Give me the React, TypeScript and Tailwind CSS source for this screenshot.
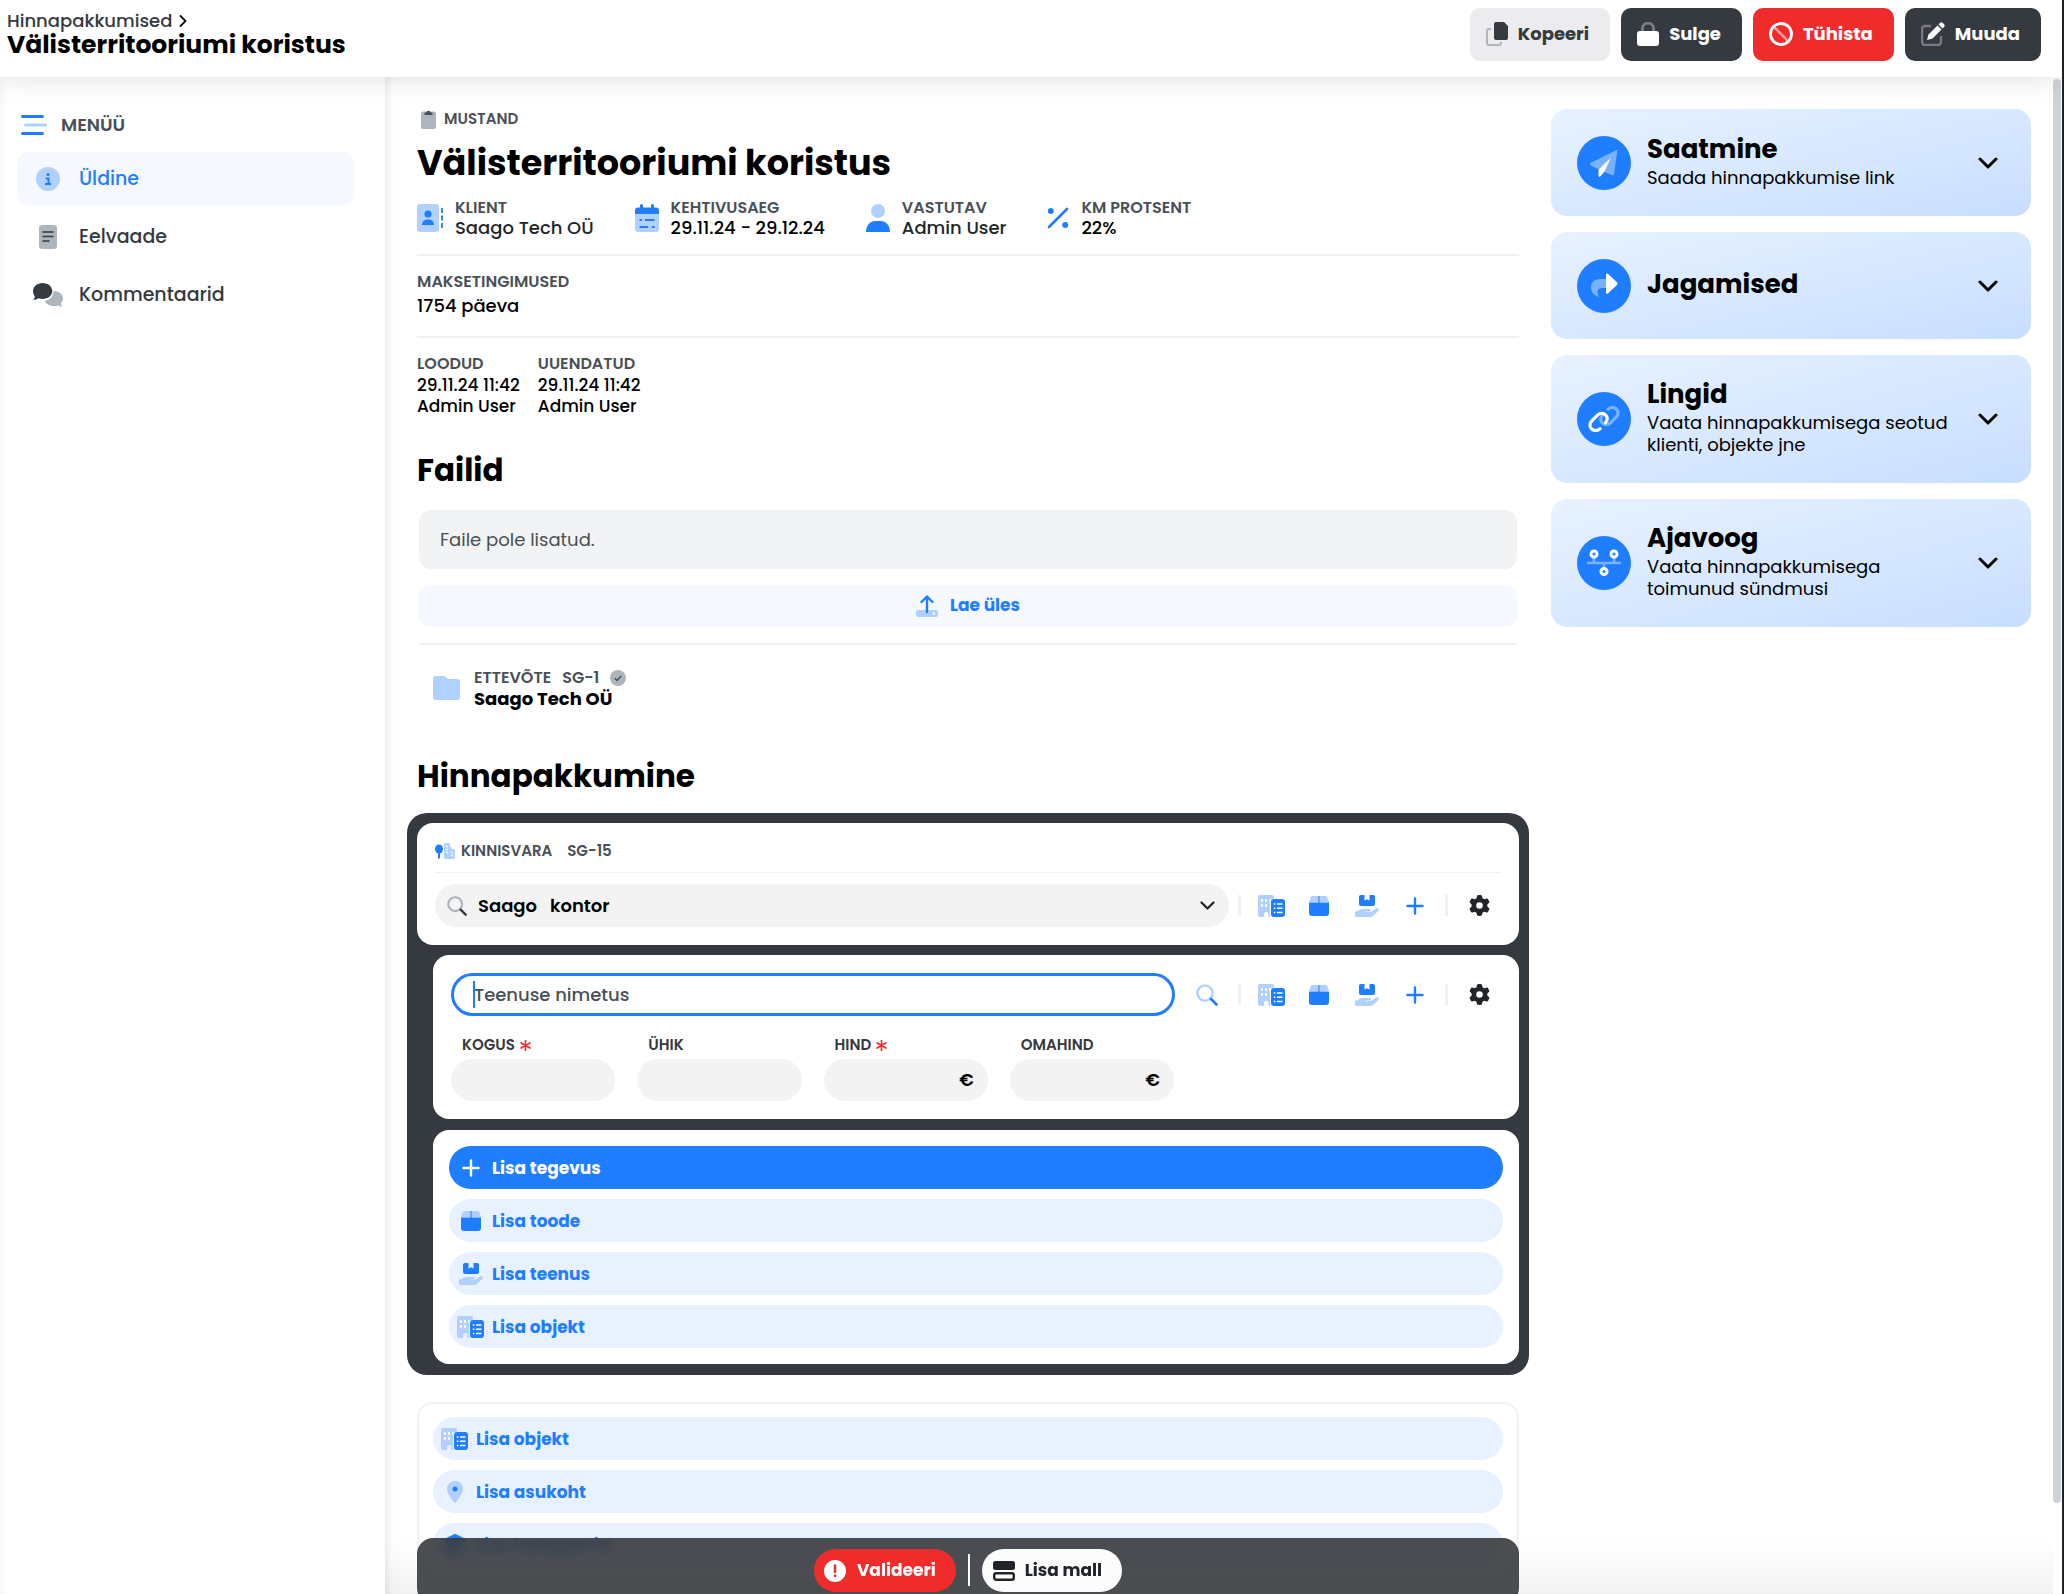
import React from "react";
import { FaGear } from "react-icons/fa6";

type IconProps = { className?: string };

const BLUE = "#1f7eff";
const PALE = "#b0d0ff";
const DARK = "#343a40";
const GREY = "#adb5bd";

function Chevron({ className }: IconProps) {
  return (
    <svg viewBox="0 0 20 12" className={className} fill="none" stroke="currentColor" strokeWidth="3" strokeLinecap="round" strokeLinejoin="round" aria-hidden="true">
      <path d="M2 2l8 8 8-8" />
    </svg>
  );
}

function ChevronRight() {
  return (
    <svg viewBox="0 0 8 12" className="h-3 w-2" fill="none" stroke="#111" strokeWidth="1.8" strokeLinecap="round" strokeLinejoin="round" aria-hidden="true">
      <path d="M1.5 1l5 5-5 5" />
    </svg>
  );
}

function CopyIcon() {
  return (
    <svg viewBox="0 0 22 24" className="h-6 w-[22px]" aria-hidden="true">
      <path d="M5 7H3a2 2 0 0 0-2 2v12a2 2 0 0 0 2 2h10a2 2 0 0 0 2-2v-1" fill="none" stroke={GREY} strokeWidth="2" />
      <path d="M10 0h8l4 4v12a2 2 0 0 1-2 2H10a2 2 0 0 1-2-2V2a2 2 0 0 1 2-2z" fill={DARK} />
    </svg>
  );
}

function LockIcon() {
  return (
    <svg viewBox="0 0 22 24" className="h-6 w-[22px]" aria-hidden="true">
      <path d="M5.5 10V6.500a5.500 5.500 0 0 1 11 0V10" fill="none" stroke="#777b80" strokeWidth="3" />
      <rect x="0" y="9" width="22" height="15" rx="3" fill="#fff" />
    </svg>
  );
}

function BanIcon() {
  return (
    <svg viewBox="0 0 24 24" className="size-6" fill="none" aria-hidden="true">
      <path d="M5 5l14 14" stroke="#f99" strokeWidth="2.500" />
      <circle cx="12" cy="12" r="10.500" stroke="#fff" strokeWidth="2.800" />
    </svg>
  );
}

function EditIcon() {
  return (
    <svg viewBox="0 0 24 24" className="size-6" aria-hidden="true">
      <path d="M10 4H4a3 3 0 0 0-3 3v13a3 3 0 0 0 3 3h13a3 3 0 0 0 3-3v-6" fill="none" stroke="#777b80" strokeWidth="2.400" />
      <path d="M16.500 3.500l4 4L11.500 16.500 6 18l1.500-5.500z" fill="#fff" />
      <path d="M17.500 2.500l1.500-1.500a2 2 0 0 1 2.800 0l1.200 1.200a2 2 0 0 1 0 2.800L21.500 6.500z" fill="#fff" />
    </svg>
  );
}

function MenuIcon() {
  return (
    <svg viewBox="0 0 28 22" className="h-[22px] w-7" strokeWidth="3" strokeLinecap="round" aria-hidden="true">
      <path d="M2.500 2.500h20M2.500 19.500h20" stroke={BLUE} />
      <path d="M5.500 11h20" stroke={PALE} />
    </svg>
  );
}

function InfoIcon() {
  return (
    <svg viewBox="0 0 24 24" className="size-6" aria-hidden="true">
      <circle cx="12" cy="12" r="12" fill={PALE} />
      <circle cx="12" cy="7.500" r="1.600" fill={BLUE} />
      <path d="M9.800 11.500h2.700v5M9 17h6" fill="none" stroke={BLUE} strokeWidth="2" />
    </svg>
  );
}

function PageIcon() {
  return (
    <svg viewBox="0 0 18 24" className="h-6 w-[18px]" aria-hidden="true">
      <rect width="18" height="24" rx="3" fill={GREY} />
      <path d="M4 7h10M4 11.500h10M4 16h6" stroke={DARK} strokeWidth="1.600" strokeLinecap="round" />
    </svg>
  );
}

function CommentsIcon() {
  return (
    <svg viewBox="0 0 30 24" className="h-6 w-[30px]" aria-hidden="true">
      <path d="M20.500 8c5.300 0 9.500 3.300 9.500 7.500 0 2-.9 3.700-2.300 5 .3 1.200 1 2.200 1.800 3-1.700.1-3.300-.3-4.700-1-1.300.4-2.800.6-4.300.5-4-.1-7.500-2-8.800-5 5-.8 8.500-4.500 8.800-10z" fill={GREY} />
      <path d="M9.700 0C15 0 19.300 3.600 19.300 8S15 16 9.700 16c-1.500 0-2.900-.3-4.100-.7C4 16.400 2 17 .2 17c.9-1 1.500-2.300 1.700-3.600C.700 12 0 10 0 8c0-4.400 4.400-8 9.700-8z" fill={DARK} />
    </svg>
  );
}

function ClipboardIcon() {
  return (
    <svg viewBox="0 0 15 20" className="h-5 w-[15px]" aria-hidden="true">
      <rect y="2.500" width="15" height="17.500" rx="2.500" fill={GREY} />
      <path d="M3.500 6V3.500h1.800a2.300 2.300 0 0 1 4.400 0h1.800V6z" fill="#495057" />
    </svg>
  );
}

function AddressIcon() {
  return (
    <svg viewBox="0 0 26 28" className="h-7 w-[26px]" aria-hidden="true">
      <rect width="22" height="28" rx="3" fill={PALE} />
      <circle cx="11" cy="10" r="3.600" fill={BLUE} />
      <path d="M5 21a5 5 0 0 1 5-5.500h2a5 5 0 0 1 5 5.500z" fill={BLUE} />
      <path d="M25 4v5M25 11.500v5M25 19v5" stroke={BLUE} strokeWidth="1.800" />
    </svg>
  );
}

function CalendarIcon() {
  return (
    <svg viewBox="0 0 24 28" className="h-7 w-6" aria-hidden="true">
      <path d="M0 10h24v15a3 3 0 0 1-3 3H3a3 3 0 0 1-3-3z" fill={PALE} />
      <path d="M0 10V6.500a3 3 0 0 1 3-3h2V1.500a1.500 1.500 0 0 1 3 0v2h8v-2a1.500 1.500 0 0 1 3 0v2h2a3 3 0 0 1 3 3V10z" fill={BLUE} />
      <path d="M4.500 16h2.500M10 16h9.500M4.500 23h8.500M17 23h2.500" stroke={BLUE} strokeWidth="2" />
    </svg>
  );
}

function UserIcon() {
  return (
    <svg viewBox="0 0 24 28" className="h-7 w-6" aria-hidden="true">
      <circle cx="12" cy="7" r="7" fill={PALE} />
      <path d="M0 28c0-6.500 4-11 9.500-11h5C20 17 24 21.500 24 28z" fill={BLUE} />
    </svg>
  );
}

function PercentIcon() {
  return (
    <svg viewBox="0 0 22 22" className="size-[22px]" aria-hidden="true">
      <path d="M20 2L2 20" stroke={BLUE} strokeWidth="2.600" strokeLinecap="round" />
      <circle cx="3.800" cy="4" r="3" fill={BLUE} />
      <circle cx="18.200" cy="18" r="3" fill={BLUE} />
    </svg>
  );
}

function UploadIcon() {
  return (
    <svg viewBox="0 0 22 22" className="size-[22px]" aria-hidden="true">
      <rect y="15" width="22" height="7" rx="2.500" fill={PALE} />
      <circle cx="18" cy="18.500" r="1.200" fill="#fff" />
      <path d="M11 17V2M5.500 7L11 1.500 16.500 7" fill="none" stroke={BLUE} strokeWidth="2.400" strokeLinecap="round" strokeLinejoin="round" />
    </svg>
  );
}

function FolderIcon() {
  return (
    <svg viewBox="0 0 27 24" className="h-6 w-[27px]" aria-hidden="true">
      <path d="M3 0h8c1.500 0 2.500 3 4 3h9a3 3 0 0 1 3 3v15a3 3 0 0 1-3 3H3a3 3 0 0 1-3-3V3a3 3 0 0 1 3-3z" fill={PALE} />
    </svg>
  );
}

function VerifiedIcon() {
  return (
    <svg viewBox="0 0 16 16" className="size-4" aria-hidden="true">
      <circle cx="8" cy="8" r="8" fill={GREY} />
      <path d="M4.800 8.300l2.200 2.200 4.200-4.500" fill="none" stroke="#495057" strokeWidth="1.500" />
    </svg>
  );
}

function EstateIcon() {
  return (
    <svg viewBox="0 0 20 16" className="h-4 w-5" aria-hidden="true">
      <ellipse cx="4" cy="6" rx="4" ry="4.500" fill={BLUE} />
      <path d="M4 6v9.500" stroke={BLUE} strokeWidth="2" />
      <path d="M9 1.500A1.500 1.500 0 0 1 10.500 0h3A1.500 1.500 0 0 1 15 1.500V6l1-3 1 3h1.500A1.500 1.500 0 0 1 20 7.500v7a1.500 1.500 0 0 1-1.500 1.500h-8A1.500 1.500 0 0 1 9 14.500z" fill={PALE} />
      <path d="M11.200 3.500h1.800M11.200 6.500h1.800M11.200 9.500h1.800M16 9.500h1.800M16 12.500h1.800" stroke="#fff" strokeWidth="1.400" />
    </svg>
  );
}

function SearchIcon({ ring, handle, className }: { ring: string; handle: string; className: string }) {
  return (
    <svg viewBox="0 0 22 22" className={className} fill="none" aria-hidden="true">
      <circle cx="9" cy="9" r="7.600" stroke={ring} strokeWidth="2.400" />
      <path d="M15 15l5.500 5.500" stroke={handle} strokeWidth="2.600" strokeLinecap="round" />
    </svg>
  );
}

function BuildingIcon() {
  return (
    <svg viewBox="0 0 27 22" className="h-[22px] w-[27px]" aria-hidden="true">
      <path d="M0 2a2 2 0 0 1 2-2h12a2 2 0 0 1 2 2v1.500a4 4 0 0 0-4 3.500v15h-1.500v-3a2 2 0 0 0-4.500 0v3H2a2 2 0 0 1-2-2z" fill={PALE} />
      <path d="M3 5.500h2M7 5.500h2M11 5.500h2M3 10.500h2M7 10.500h2" stroke="#fff" strokeWidth="2.600" />
      <rect x="13" y="4" width="14" height="18" rx="3" fill={BLUE} />
      <path d="M15.800 9h1.600M19 9h5.500M15.800 13.200h1.600M19 13.200h5.500M15.800 17.500h1.600M19 17.500h5.500" stroke="#fff" strokeWidth="1.500" />
    </svg>
  );
}

function BoxIcon() {
  return (
    <svg viewBox="0 0 20 20" className="size-5" aria-hidden="true">
      <path d="M3.500 0h5.900v6H0l1.500-4.500A2 2 0 0 1 3.500 0zM10.600 0h5.900a2 2 0 0 1 2 1.500L20 6h-9.400z" fill={PALE} />
      <path d="M0 6.500h9.400V0h1.200v6.500H20V17a3 3 0 0 1-3 3H3a3 3 0 0 1-3-3z" fill={BLUE} />
    </svg>
  );
}

function HandBoxIcon() {
  return (
    <svg viewBox="0 0 24 22" className="h-[22px] w-6" aria-hidden="true">
      <path d="M6 0h3.500v5.500L12 4.200l2.500 1.300V0H18a2 2 0 0 1 2 2v7a2 2 0 0 1-2 2H6a2 2 0 0 1-2-2V2a2 2 0 0 1 2-2z" fill={BLUE} />
      <path d="M0 17.500c0-.8.500-1.200 1.200-1.200h1.600c1.500-1.600 3-2.300 5.200-2.300h6.500c1.600 0 1.600 2.300 0 2.500l-4 .3c2 .8 4.500.7 6-.3l5-3.200c1.600-.8 3.100.8 2 2.200-1.600 2-3.700 3.800-5.500 5.200-1.300 1-2 1.300-3.500 1.300H1.200C.500 22 0 21.500 0 20.800z" fill={PALE} />
    </svg>
  );
}

function PlusIcon() {
  return (
    <svg viewBox="0 0 18 18" className="size-[18px]" stroke="currentColor" strokeWidth="2.400" strokeLinecap="round" aria-hidden="true">
      <path d="M9 1.500v15M1.500 9h15" />
    </svg>
  );
}

function PinIcon() {
  return (
    <svg viewBox="0 0 16 22" className="h-[22px] w-4" aria-hidden="true">
      <path d="M8 0a8 8 0 0 1 8 8c0 4-4.500 10-7.200 13.500a1 1 0 0 1-1.600 0C4.500 18 0 12 0 8a8 8 0 0 1 8-8z" fill={PALE} />
      <circle cx="8" cy="8" r="2.500" fill={BLUE} />
    </svg>
  );
}

function LayersIcon() {
  return (
    <svg viewBox="0 0 22 22" className="size-[22px]" aria-hidden="true">
      <path d="M9.500.4a3 3 0 0 1 3 0L22 5v3l-9.500 5a3 3 0 0 1-3 0L0 8V5z" fill={BLUE} />
      <path d="M0 11l11 6 11-6v5l-11 6-11-6z" fill={BLUE} />
    </svg>
  );
}

function PlaneIcon() {
  return (
    <svg viewBox="0 0 28 28" className="size-7" aria-hidden="true">
      <path d="M27.500.5L24 25a1.500 1.500 0 0 1-2.200 1L9 20.500 1 16.500c-1.300-.7-1.300-2 0-2.700z" fill="#78b1ff" />
      <path d="M21 8.500l-6.500 14-4 4.800c-.8.900-2 .4-2-.8v-5.700z" fill="#fff" />
    </svg>
  );
}

function ShareIcon() {
  return (
    <svg viewBox="0 0 28 26" className="h-[26px] w-7" aria-hidden="true">
      <path d="M16 6v9h-4c-3.500 0-5 2.500-4.500 5 .3 1.800 1.300 2.700 1 4C4 22 1 19 1 14.500 1 9.500 4.500 6 10 6z" fill="#78b1ff" />
      <path d="M16 2c0-1.300 1.300-1.800 2.200-1l9 8.600c.7.700.7 1.500 0 2.200l-9 8.500c-.9.900-2.200.4-2.200-.9z" fill="#fff" />
    </svg>
  );
}

function LinkIcon() {
  return (
    <svg viewBox="0 0 32 26" className="h-[26px] w-8" fill="none" strokeWidth="3.200" strokeLinecap="round" aria-hidden="true">
      <path d="M20 3.200c3.500-3 8-1.800 9.500 1.500 1 2.500.4 4.800-1.300 6.500l-5.700 5.700c-2.500 2.500-6 2.300-8 .2-2.200-2.200-2.300-5 0-8" stroke="#78b1ff" />
      <path d="M12 22.800c-3.500 3-8 1.800-9.500-1.500-1-2.500-.4-4.800 1.300-6.500l5.700-5.700c2.500-2.500 6-2.300 8-.2 2.200 2.200 2.300 5 0 8" stroke="#fff" />
    </svg>
  );
}

function TimelineIcon() {
  return (
    <svg viewBox="0 0 34 28" className="h-7 w-[34px]" fill="none" aria-hidden="true">
      <path d="M0 14h34M7 8v6M27 8v6M17 14v6" stroke="#78b1ff" strokeWidth="2.600" />
      <circle cx="7" cy="5" r="3" stroke="#fff" strokeWidth="3" />
      <circle cx="27" cy="5" r="3" stroke="#fff" strokeWidth="3" />
      <circle cx="17" cy="22.500" r="3" stroke="#fff" strokeWidth="3" />
    </svg>
  );
}

function AlertIcon() {
  return (
    <svg viewBox="0 0 22 22" className="size-[22px]" aria-hidden="true">
      <circle cx="11" cy="11" r="11" fill="#fff" />
      <path d="M11 5.500v6.500" stroke="#f02b2b" strokeWidth="2.400" strokeLinecap="round" />
      <circle cx="11" cy="15.800" r="1.400" fill="#f02b2b" />
    </svg>
  );
}

function TemplateIcon() {
  return (
    <svg viewBox="0 0 22 20" className="h-5 w-[22px]" aria-hidden="true">
      <rect width="22" height="9" rx="2.500" fill="#212529" />
      <rect x="1.200" y="12.200" width="19.600" height="6.600" rx="2" fill="none" stroke="#212529" strokeWidth="2.400" />
    </svg>
  );
}

const headerButtons = [
  { label: "Kopeeri", icon: <CopyIcon />, tone: "bg-[#ececee] text-[#343a40]" },
  { label: "Sulge", icon: <LockIcon />, tone: "bg-[#343a40] text-white" },
  { label: "Tühista", icon: <BanIcon />, tone: "bg-[#f02b2b] text-white" },
  { label: "Muuda", icon: <EditIcon />, tone: "bg-[#343a40] text-white" },
];

const menu = [
  { label: "Üldine", icon: <InfoIcon />, tone: "bg-[#f5f8ff] text-[#1f7eff]" },
  { label: "Eelvaade", icon: <PageIcon />, tone: "text-[#343a40]" },
  { label: "Kommentaarid", icon: <CommentsIcon />, tone: "text-[#343a40]" },
];

const meta = [
  { label: "KLIENT", value: "Saago Tech OÜ", icon: <AddressIcon />, tone: "text-[#212529]" },
  { label: "KEHTIVUSAEG", value: "29.11.24 - 29.12.24", icon: <CalendarIcon />, tone: "text-black" },
  { label: "VASTUTAV", value: "Admin User", icon: <UserIcon />, tone: "text-[#212529]" },
  { label: "KM PROTSENT", value: "22%", icon: <PercentIcon />, tone: "text-black" },
];

const panels = [
  { title: "Saatmine", text: "Saada hinnapakkumise link", icon: <PlaneIcon /> },
  { title: "Jagamised", text: "", icon: <ShareIcon /> },
  { title: "Lingid", text: "Vaata hinnapakkumisega seotud klienti, objekte jne", icon: <LinkIcon /> },
  { title: "Ajavoog", text: "Vaata hinnapakkumisega toimunud sündmusi", icon: <TimelineIcon /> },
];

const fields = [
  { id: "kogus", label: "KOGUS", required: true, euro: false },
  { id: "uhik", label: "ÜHIK", required: false, euro: false },
  { id: "hind", label: "HIND", required: true, euro: true },
  { id: "omahind", label: "OMAHIND", required: false, euro: true },
];

function PillButton({ icon, label, primary = false }: { icon: React.ReactNode; label: string; primary?: boolean }) {
  return (
    <button
      type="button"
      className={`flex h-[43px] w-full items-center rounded-full text-[17px] leading-5 font-bold ${primary ? "bg-[#1f7eff] text-white" : "bg-[#e8f1ff] text-[#1f7eff]"}`}
    >
      <span className="flex w-[43px] justify-center">{icon}</span>
      {label}
    </button>
  );
}

function RowActions() {
  const actions = [
    { label: "Lisa objekt", icon: <BuildingIcon /> },
    { label: "Lisa toode", icon: <BoxIcon /> },
    { label: "Lisa teenus", icon: <HandBoxIcon /> },
    { label: "Lisa tegevus", icon: <PlusIcon /> },
  ];
  return (
    <div className="flex shrink-0 items-center pl-[9px]">
      <span className="h-[21px] w-[3px] bg-[#f1f1f1]" />
      <div className="flex px-[6px]">
        {actions.map((a) => (
          <button key={a.label} type="button" aria-label={a.label} className="flex h-10 w-12 items-center justify-center text-[#1f7eff]">
            {a.icon}
          </button>
        ))}
      </div>
      <span className="h-[21px] w-[3px] bg-[#f1f1f1]" />
      <button type="button" aria-label="Seaded" className="ml-[9px] flex h-10 w-11 items-center justify-center text-[#212529]">
        <FaGear className="size-[21px]" />
      </button>
    </div>
  );
}

function Stamp({ label }: { label: string }) {
  return (
    <div>
      <div className="mb-px text-base leading-5 font-semibold text-[#495057]">{label}</div>
      <div className="text-[17px] leading-[21px] font-medium">29.11.24 11:42</div>
      <div className="text-[17px] leading-[21px] font-medium">Admin User</div>
    </div>
  );
}

function QuoteEditor() {
  return (
    <div className="-mx-[10px] mt-[17px] flex flex-col gap-[10px] rounded-[20px] bg-[#343a40] px-[10px] pt-[10px] pb-[11px]">
      <section className="rounded-2xl bg-white px-[18px] py-[18px]">
        <div className="flex items-center border-b border-[#f1f1f1] pb-[11px] text-[15px] leading-5 font-semibold text-[#495057]">
          <EstateIcon />
          <span className="ml-[6px]">KINNISVARA</span>
          <span className="ml-[15px]">SG-15</span>
        </div>
        <div className="mt-[11px] flex items-center">
          <div className="relative flex-1">
            <select aria-label="Kinnisvara" className="h-[43px] w-full appearance-none rounded-full bg-[#f3f3f3] pl-[43px] text-lg font-semibold text-black outline-none">
              <option>{"Saago\u00a0\u00a0\u00a0kontor"}</option>
            </select>
            <span className="pointer-events-none absolute inset-y-0 left-3 flex items-center">
              <SearchIcon ring={GREY} handle="#343a40" className="size-5" />
            </span>
            <span className="pointer-events-none absolute inset-y-0 right-[14px] flex items-center text-[#212529]">
              <Chevron className="h-[9px] w-[15px]" />
            </span>
          </div>
          <RowActions />
        </div>
      </section>

      <section className="ml-4 rounded-2xl bg-white px-[18px] py-[18px]">
        <div className="flex items-center">
          <div className="relative flex-1">
            <input
              type="text"
              aria-label="Teenuse nimetus"
              placeholder="Teenuse nimetus"
              className="h-[43px] w-full rounded-full border-[3px] border-[#1f7eff] bg-white pl-5 text-lg font-medium text-black outline-none placeholder:text-[#495057]"
            />
            <span className="absolute top-2 left-[22px] h-[27px] w-[2px] bg-[#1f7eff]" />
          </div>
          <button type="button" aria-label="Otsi" className="flex h-10 w-[54px] items-center justify-center pl-[10px]">
            <SearchIcon ring={PALE} handle={BLUE} className="size-[22px]" />
          </button>
          <RowActions />
        </div>
        <div className="mt-[19px] mr-[327px] grid grid-cols-4 gap-[22px]">
          {fields.map((f) => (
            <div key={f.id}>
              <label htmlFor={f.id} className="flex items-center pl-[11px] text-[15px] leading-5 font-semibold text-[#343a40]">
                {f.label}
                {f.required && (
                  <svg viewBox="0 0 10 10" className="ml-[5px] size-[11px]" stroke="#f02b2b" strokeWidth="1.500" strokeLinecap="round" aria-hidden="true">
                    <path d="M5 .5v9M1 2.700l8 4.600M9 2.700L1 7.300" />
                  </svg>
                )}
              </label>
              <div className="relative mt-1">
                <input id={f.id} type="text" className="h-[42px] w-full rounded-full bg-[#f3f3f3] px-4 outline-none" />
                {f.euro && <span className="pointer-events-none absolute inset-y-0 right-[14px] flex items-center text-lg font-semibold text-black">€</span>}
              </div>
            </div>
          ))}
        </div>
      </section>

      <section className="mt-px ml-4 flex flex-col gap-[10px] rounded-2xl bg-white p-4">
        <PillButton primary icon={<PlusIcon />} label="Lisa tegevus" />
        <PillButton icon={<BoxIcon />} label="Lisa toode" />
        <PillButton icon={<HandBoxIcon />} label="Lisa teenus" />
        <PillButton icon={<BuildingIcon />} label="Lisa objekt" />
      </section>
    </div>
  );
}

export default function App() {
  return (
    <div className="flex h-screen overflow-hidden bg-white font-['Poppins','Inter',sans-serif] text-black">
      <div className="flex min-w-0 flex-1 flex-col">
        <header className="relative z-10 flex h-[77px] shrink-0 items-start justify-between bg-white pr-[21px] pl-[7px] shadow-[0_2px_24px_rgba(0,0,0,0.12)]">
          <div className="pt-[11px]">
            <nav className="flex items-center gap-[7px] text-lg leading-5 font-medium text-[#343a40]">
              <a href="#pakkumised">Hinnapakkumised</a>
              <ChevronRight />
            </nav>
            <div className="text-[25px] leading-7 font-bold">Välisterritooriumi koristus</div>
          </div>
          <div className="flex gap-[11px] pt-2">
            {headerButtons.map((b) => (
              <button key={b.label} type="button" className={`flex h-[53px] items-center gap-[10px] rounded-[10px] pr-[21px] pb-px pl-4 text-lg leading-5 font-bold ${b.tone}`}>
                {b.icon}
                {b.label}
              </button>
            ))}
          </div>
        </header>

        <div className="flex min-h-0 flex-1">
          <aside className="w-[385px] shrink-0 pt-[37px] pr-[31px] pl-[17px] shadow-[inset_8px_0_10px_-8px_rgba(0,0,0,0.08)]">
            <div className="flex items-center pl-[3px] text-lg leading-5 font-semibold text-[#495057]">
              <MenuIcon />
              <span className="ml-[13px]">MENÜÜ</span>
            </div>
            <nav className="mt-4 flex flex-col gap-[5px]">
              {menu.map((m) => (
                <a key={m.label} href="#menu" className={`flex h-[53px] items-center rounded-xl text-[19px] leading-6 font-medium ${m.tone}`}>
                  <span className="flex w-[62px] justify-center">{m.icon}</span>
                  {m.label}
                </a>
              ))}
            </nav>
          </aside>

          <div className="flex min-w-0 flex-1 shadow-[inset_8px_0_8px_-6px_rgba(0,0,0,0.1)]">
            <main className="relative min-w-0 flex-1 overflow-hidden px-8 pt-[30px]">
              <div className="flex items-center text-[15px] leading-6 font-semibold text-[#495057]">
                <span className="flex w-[27px] pl-1">
                  <ClipboardIcon />
                </span>
                MUSTAND
              </div>
              <h1 className="mt-3 text-[35px] leading-10 font-bold">Välisterritooriumi koristus</h1>

              <div className="mt-[15px] flex gap-[41px] border-b-2 border-[#f1f1f1] pb-4">
                {meta.map((m) => (
                  <div key={m.label} className="flex items-center gap-3">
                    {m.icon}
                    <div>
                      <div className="text-base leading-5 font-semibold text-[#495057]">{m.label}</div>
                      <div className={`text-lg leading-5 font-medium ${m.tone}`}>{m.value}</div>
                    </div>
                  </div>
                ))}
              </div>

              <div className="border-b-2 border-[#f1f1f1] pt-4 pb-[18px]">
                <div className="text-base leading-5 font-semibold text-[#495057]">MAKSETINGIMUSED</div>
                <div className="mt-[2px] text-lg leading-6 font-medium">1754 päeva</div>
              </div>

              <div className="flex gap-[18px] pt-4">
                <Stamp label="LOODUD" />
                <Stamp label="UUENDATUD" />
              </div>

              <h2 className="mt-[33px] text-[31px] leading-10 font-bold">Failid</h2>
              <div className="mx-[2px] mt-5 flex h-[59px] items-center rounded-xl bg-[#f2f3f4] px-[21px] text-lg text-[#495057]">Faile pole lisatud.</div>
              <button type="button" className="mx-[2px] mt-4 flex h-[42px] w-[calc(100%-4px)] items-center justify-center gap-3 rounded-xl bg-[#f5f8ff] text-[17px] font-bold text-[#1f7eff]">
                <UploadIcon />
                Lae üles
              </button>

              <div className="mx-[2px] mt-4 border-t-2 border-[#f1f1f1] pt-[22px]">
                <div className="flex items-center gap-[14px] pl-[14px]">
                  <FolderIcon />
                  <div>
                    <div className="flex items-center gap-[11px] text-base leading-[21px] font-semibold text-[#495057]">
                      <span>ETTEVÕTE</span>
                      <span>SG-1</span>
                      <VerifiedIcon />
                    </div>
                    <div className="text-lg leading-[21px] font-bold">Saago Tech OÜ</div>
                  </div>
                </div>
              </div>

              <h2 className="mt-[47px] text-[31px] leading-10 font-bold">Hinnapakkumine</h2>
              <QuoteEditor />

              <div className="mt-[27px] flex flex-col gap-[10px] rounded-2xl border-2 border-[#f1f1f1] px-[14px] py-[13px]">
                <PillButton icon={<BuildingIcon />} label="Lisa objekt" />
                <PillButton icon={<PinIcon />} label="Lisa asukoht" />
                <PillButton icon={<LayersIcon />} label="Lisa kategooria" />
              </div>

              <div className="pointer-events-none absolute inset-x-0 bottom-0 h-14 bg-linear-to-b from-transparent to-black/5" />
              <div className="absolute right-8 -bottom-[10px] left-8 flex h-[66px] items-start justify-center rounded-2xl bg-[#373b3e]/90 pt-[11px] backdrop-blur-xs">
                <button type="button" className="flex h-[43px] items-center gap-[11px] rounded-full bg-[#f02b2b] pr-5 pl-[10px] text-[17px] font-bold text-white">
                  <AlertIcon />
                  Valideeri
                </button>
                <span className="mx-3 mt-[5px] h-8 w-[2px] bg-white" />
                <button type="button" className="flex h-[43px] items-center gap-[10px] rounded-full bg-[#fcfcfc] pr-5 pl-[11px] text-[17px] font-bold text-[#212529]">
                  <TemplateIcon />
                  Lisa mall
                </button>
              </div>
            </main>

            <aside className="relative flex w-[502px] shrink-0 flex-col gap-4 pt-8 pr-[22px]">
              {panels.map((p) => (
                <button
                  key={p.title}
                  type="button"
                  className="flex min-h-[107px] items-center rounded-2xl bg-linear-to-br from-[#e8f2ff] to-[#c8deff] py-[23px] pr-[33px] pl-[26px] text-left"
                >
                  <span className="flex size-[54px] shrink-0 items-center justify-center rounded-full bg-[#1f7eff]">{p.icon}</span>
                  <span className="mr-4 ml-4 flex-1 pb-1">
                    <span className="block text-[26px] leading-8 font-bold">{p.title}</span>
                    {p.text && <span className="mt-[2px] block text-lg leading-[22px]">{p.text}</span>}
                  </span>
                  <Chevron className="h-3 w-5" />
                </button>
              ))}
              <div className="pointer-events-none absolute inset-x-0 bottom-0 h-14 bg-linear-to-b from-transparent to-black/5" />
            </aside>

            <div className="flex w-[9px] shrink-0 flex-col pt-[2px]">
              <div className="h-[94%] w-2 rounded-full bg-[#cdd3d8]" />
            </div>
          </div>
        </div>
      </div>
      <div className="w-[2px] shrink-0 bg-[#202328]" />
    </div>
  );
}
